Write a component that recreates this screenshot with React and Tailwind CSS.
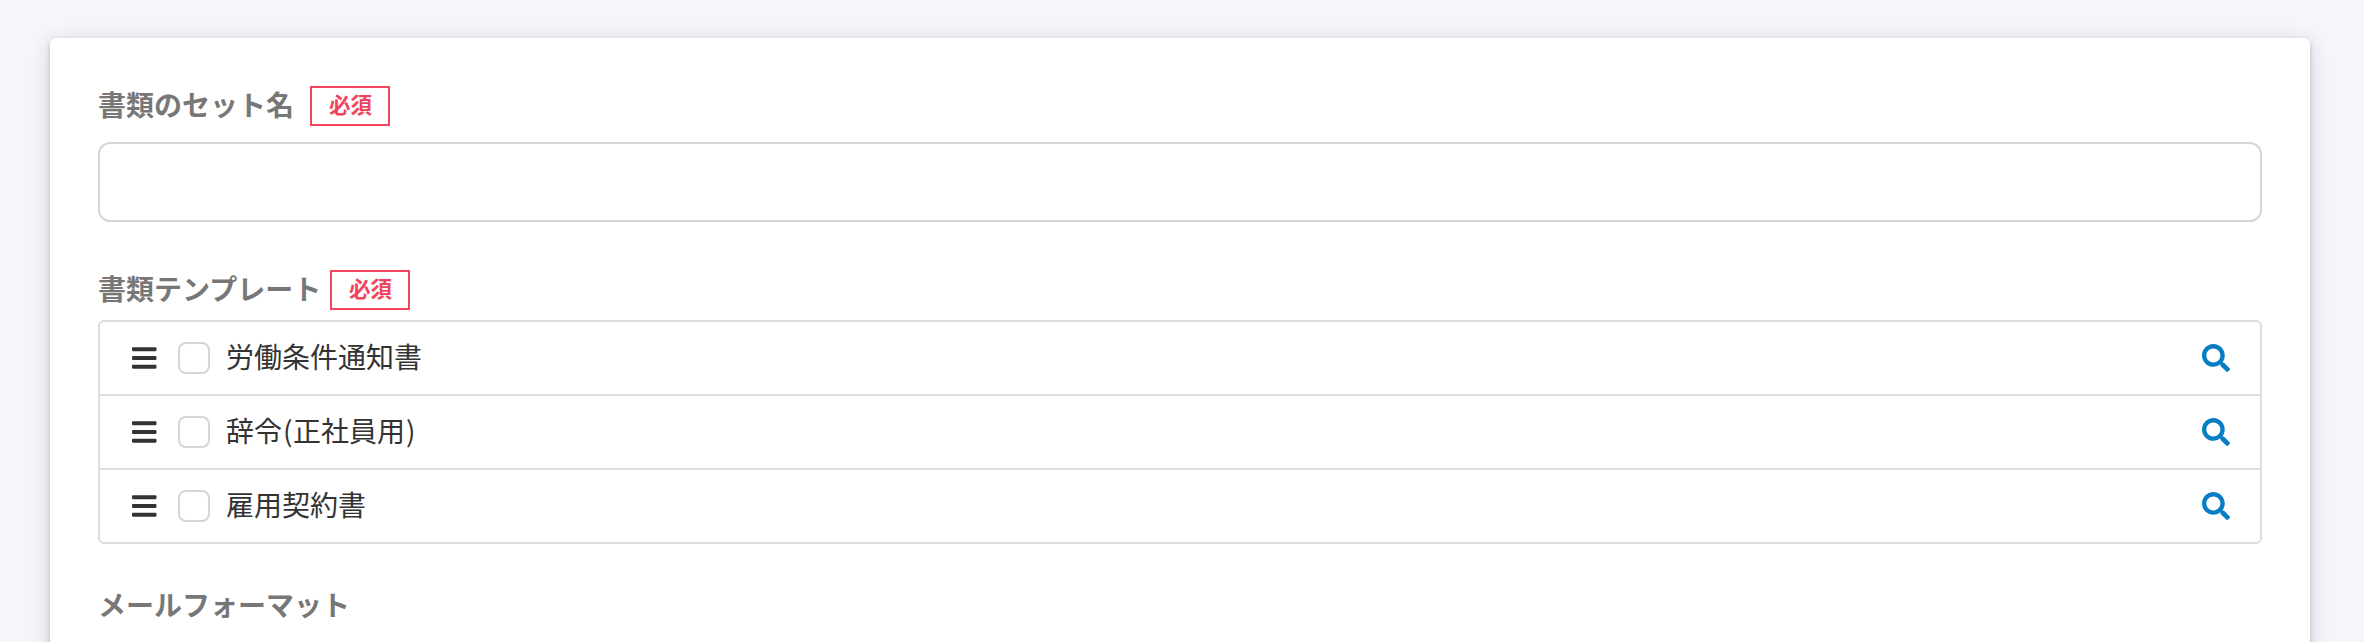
import { FaBars, FaSearch } from "react-icons/fa";

const templates = ["労働条件通知書", "辞令(正社員用)", "雇用契約書"];

function RequiredBadge() {
  return (
    <span className="flex h-10 w-20 shrink-0 items-center justify-center border-2 border-[#f2455d] pb-1 pl-px text-[21.5px] leading-none font-bold text-[#f2455d]">
      必須
    </span>
  );
}

function Label({ children, className = "" }) {
  return (
    <span className={`block pb-1 text-[28px] leading-9 font-bold text-[#777777] ${className}`}>
      {children}
    </span>
  );
}

function TemplateName({ name }) {
  return name.split(/([()])/).map((part, i) =>
    part === "(" || part === ")" ? (
      <span key={i} className="pl-px tracking-[0.5px]">
        {part}
      </span>
    ) : (
      part
    ),
  );
}

function TemplateRow({ name }) {
  return (
    <li className="flex h-[74px] items-center border-b-2 border-[#dedede] pr-[30px] pl-8 last:h-[72px] last:border-b-0">
      <FaBars className="h-7 w-[24.5px] text-[#333333]" />
      <input
        type="checkbox"
        aria-label={name}
        className="ml-[21.5px] size-8 appearance-none rounded-lg border-2 border-[#d6d6d6] bg-white"
      />
      <span className="ml-4 pb-1 text-[28px] leading-10 text-[#333333]">
        <TemplateName name={name} />
      </span>
      <FaSearch className="ml-auto size-7 text-[#077dc4]" />
    </li>
  );
}

export default function App() {
  return (
    <div className="h-[642px] overflow-hidden bg-[#f4f6fa] pt-[38px] pr-[54px] pl-[50px] font-['Noto_Sans_CJK_JP',sans-serif]">
      <main className="h-[700px] rounded-md bg-white px-12 pt-12 shadow-[0_2px_4px_rgba(0,0,0,0.18),0_4px_20px_rgba(20,20,50,0.16)]">
        <div className="flex h-10 items-center gap-4">
          <Label>書類のセット名</Label>
          <RequiredBadge />
        </div>
        <input
          type="text"
          aria-label="書類のセット名"
          className="mt-4 block h-20 w-full rounded-xl border-2 border-[#d6d6d6] bg-white px-4 text-[28px]"
        />
        <div className="mt-12 flex h-10 items-center gap-2">
          <Label className="w-56">書類テンプレート</Label>
          <RequiredBadge />
        </div>
        <ul className="mt-2.5 rounded-md border-2 border-[#dedede]">
          {templates.map((name) => (
            <TemplateRow key={name} name={name} />
          ))}
        </ul>
        <div className="mt-[42px] flex h-10 items-center">
          <Label>メールフォーマット</Label>
        </div>
      </main>
    </div>
  );
}
